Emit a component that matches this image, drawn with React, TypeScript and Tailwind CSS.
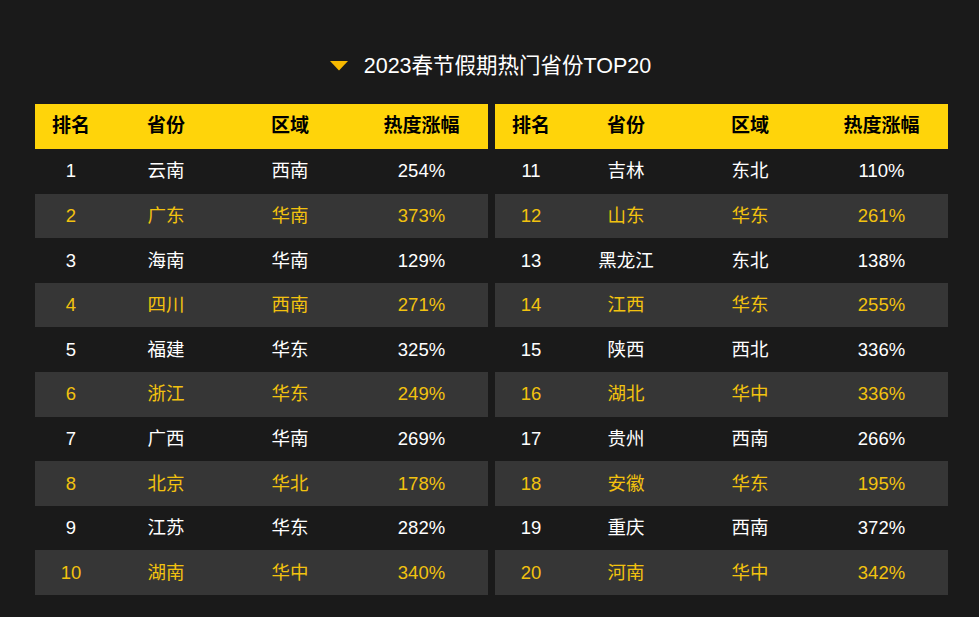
const left = [
  ['1', '云南', '西南', '254%'],
  ['2', '广东', '华南', '373%'],
  ['3', '海南', '华南', '129%'],
  ['4', '四川', '西南', '271%'],
  ['5', '福建', '华东', '325%'],
  ['6', '浙江', '华东', '249%'],
  ['7', '广西', '华南', '269%'],
  ['8', '北京', '华北', '178%'],
  ['9', '江苏', '华东', '282%'],
  ['10', '湖南', '华中', '340%'],
];

const right = [
  ['11', '吉林', '东北', '110%'],
  ['12', '山东', '华东', '261%'],
  ['13', '黑龙江', '东北', '138%'],
  ['14', '江西', '华东', '255%'],
  ['15', '陕西', '西北', '336%'],
  ['16', '湖北', '华中', '336%'],
  ['17', '贵州', '西南', '266%'],
  ['18', '安徽', '华东', '195%'],
  ['19', '重庆', '西南', '372%'],
  ['20', '河南', '华中', '342%'],
];

const cols = ['w-[72px]', 'w-[118px]', 'w-[130px]', 'flex-1'];

function RankTable({ rows }: { rows: string[][] }) {
  return (
    <div className="w-[453px] flex flex-col">
      <div className="flex h-[45px] items-center bg-[#ffd40a] text-[19px] font-bold text-black">
        {['排名', '省份', '区域', '热度涨幅'].map((h, i) => (
          <div key={h} className={`${cols[i]} text-center`}>{h}</div>
        ))}
      </div>
      {rows.map((r, idx) => {
        const odd = idx % 2 === 1;
        return (
          <div
            key={r[0]}
            className={`flex h-[44.6px] items-center text-[18.5px] ${odd ? 'bg-[#363636] text-[#f2c20f]' : 'text-white'}`}
          >
            {r.map((c, i) => (
              <div key={i} className={`${cols[i]} text-center`}>{c}</div>
            ))}
          </div>
        );
      })}
    </div>
  );
}

export default function App() {
  return (
    <div
      className="w-[979px] h-[617px] bg-[#1a1a1a] overflow-hidden"
      style={{ fontFamily: '"Liberation Sans", "Noto Sans CJK SC", sans-serif' }}
    >
      <div className="h-[104px] pt-[50px]">
        <div className="flex h-[32px] items-center justify-center gap-[16px] ml-[2px]">
          <svg width="18" height="10" viewBox="0 0 18 10">
            <polygon points="0,0 18,0 9,9.5" fill="#f5b800" />
          </svg>
          <span className="text-[21.5px] text-white">2023春节假期热门省份TOP20</span>
        </div>
      </div>
      <div className="flex gap-[7px] pl-[35px]">
        <RankTable rows={left} />
        <RankTable rows={right} />
      </div>
    </div>
  );
}
